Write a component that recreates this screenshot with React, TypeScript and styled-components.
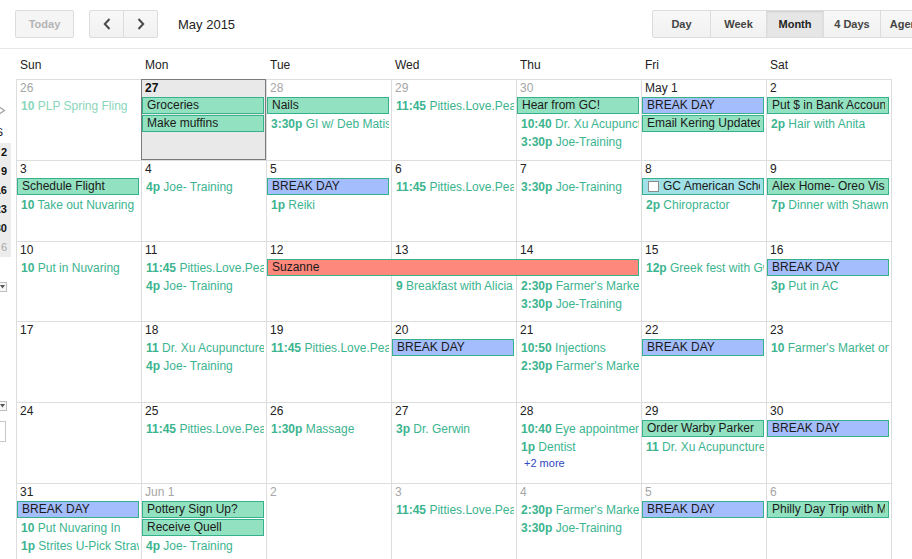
import React from 'react';
import styled, { createGlobalStyle } from 'styled-components';

const GlobalStyle = createGlobalStyle`
  html, body {
    margin: 0;
    padding: 0;
    overflow: hidden;
    background: #fff;
  }
  body {
    font-family: 'Liberation Sans', Arial, sans-serif;
    color: #222;
  }
`;

type Tone = 'green' | 'blue' | 'red' | 'cyan';

type CalEvent =
  | { kind: 'chip'; col: number; slot: number; span?: number; tone: Tone; title: string; task?: boolean }
  | { kind: 'timed'; col: number; slot: number; time: string; title: string; faded?: boolean }
  | { kind: 'more'; col: number; slot: number; count: number };

type Day = { label: string; muted?: boolean; today?: boolean };
type Week = { days: Day[]; events: CalEvent[] };

const toneFill: Record<Tone, string> = {
  green: '#92e1c0',
  blue: '#a4bdfc',
  red: '#ff887c',
  cyan: '#9fe1e7',
};

const chip = (col: number, slot: number, tone: Tone, title: string, span = 1): CalEvent => ({
  kind: 'chip', col, slot, tone, title, span,
});
const timed = (col: number, slot: number, time: string, title: string, faded = false): CalEvent => ({
  kind: 'timed', col, slot, time, title, faded,
});

const weeks: Week[] = [
  {
    days: [
      { label: '26', muted: true },
      { label: '27', today: true },
      { label: '28', muted: true },
      { label: '29', muted: true },
      { label: '30', muted: true },
      { label: 'May 1' },
      { label: '2' },
    ],
    events: [
      timed(1, 1, '10', 'PLP Spring Fling', true),
      chip(2, 1, 'green', 'Groceries'),
      chip(2, 2, 'green', 'Make muffins'),
      chip(3, 1, 'green', 'Nails'),
      timed(3, 2, '3:30p', 'GI w/ Deb Matisse'),
      timed(4, 1, '11:45', 'Pitties.Love.Peace'),
      chip(5, 1, 'green', 'Hear from GC!'),
      timed(5, 2, '10:40', 'Dr. Xu Acupuncture'),
      timed(5, 3, '3:30p', 'Joe-Training'),
      chip(6, 1, 'blue', 'BREAK DAY'),
      chip(6, 2, 'green', 'Email Kering Updated'),
      chip(7, 1, 'green', 'Put $ in Bank Account'),
      timed(7, 2, '2p', 'Hair with Anita'),
    ],
  },
  {
    days: ['3', '4', '5', '6', '7', '8', '9'].map((label) => ({ label })),
    events: [
      chip(1, 1, 'green', 'Schedule Flight'),
      timed(1, 2, '10', 'Take out Nuvaring'),
      timed(2, 1, '4p', 'Joe- Training'),
      chip(3, 1, 'blue', 'BREAK DAY'),
      timed(3, 2, '1p', 'Reiki'),
      timed(4, 1, '11:45', 'Pitties.Love.Peace'),
      timed(5, 1, '3:30p', 'Joe-Training'),
      { kind: 'chip', col: 6, slot: 1, tone: 'cyan', title: 'GC American School', task: true },
      timed(6, 2, '2p', 'Chiropractor'),
      chip(7, 1, 'green', 'Alex Home- Oreo Visit'),
      timed(7, 2, '7p', 'Dinner with Shawna'),
    ],
  },
  {
    days: ['10', '11', '12', '13', '14', '15', '16'].map((label) => ({ label })),
    events: [
      timed(1, 1, '10', 'Put in Nuvaring'),
      timed(2, 1, '11:45', 'Pitties.Love.Peace'),
      timed(2, 2, '4p', 'Joe- Training'),
      chip(3, 1, 'red', 'Suzanne', 3),
      timed(4, 2, '9', 'Breakfast with Alicia'),
      timed(5, 2, '2:30p', "Farmer's Market"),
      timed(5, 3, '3:30p', 'Joe-Training'),
      timed(6, 1, '12p', 'Greek fest with Gwen'),
      chip(7, 1, 'blue', 'BREAK DAY'),
      timed(7, 2, '3p', 'Put in AC'),
    ],
  },
  {
    days: ['17', '18', '19', '20', '21', '22', '23'].map((label) => ({ label })),
    events: [
      timed(2, 1, '11', 'Dr. Xu Acupuncture'),
      timed(2, 2, '4p', 'Joe- Training'),
      timed(3, 1, '11:45', 'Pitties.Love.Peace'),
      chip(4, 1, 'blue', 'BREAK DAY'),
      timed(5, 1, '10:50', 'Injections'),
      timed(5, 2, '2:30p', "Farmer's Market"),
      chip(6, 1, 'blue', 'BREAK DAY'),
      timed(7, 1, '10', "Farmer's Market on Main"),
    ],
  },
  {
    days: ['24', '25', '26', '27', '28', '29', '30'].map((label) => ({ label })),
    events: [
      timed(2, 1, '11:45', 'Pitties.Love.Peace'),
      timed(3, 1, '1:30p', 'Massage'),
      timed(4, 1, '3p', 'Dr. Gerwin'),
      timed(5, 1, '10:40', 'Eye appointment'),
      timed(5, 2, '1p', 'Dentist'),
      { kind: 'more', col: 5, slot: 3, count: 2 },
      chip(6, 1, 'green', 'Order Warby Parker'),
      timed(6, 2, '11', 'Dr. Xu Acupuncture'),
      chip(7, 1, 'blue', 'BREAK DAY'),
    ],
  },
  {
    days: [
      { label: '31' },
      { label: 'Jun 1', muted: true },
      { label: '2', muted: true },
      { label: '3', muted: true },
      { label: '4', muted: true },
      { label: '5', muted: true },
      { label: '6', muted: true },
    ],
    events: [
      chip(1, 1, 'blue', 'BREAK DAY'),
      timed(1, 2, '10', 'Put Nuvaring In'),
      timed(1, 3, '1p', 'Strites U-Pick Strawberries'),
      chip(2, 1, 'green', 'Pottery Sign Up?'),
      chip(2, 2, 'green', 'Receive Quell'),
      timed(2, 3, '4p', 'Joe- Training'),
      timed(4, 1, '11:45', 'Pitties.Love.Peace'),
      timed(5, 1, '2:30p', "Farmer's Market"),
      timed(5, 2, '3:30p', 'Joe-Training'),
      chip(6, 1, 'blue', 'BREAK DAY'),
      chip(7, 1, 'green', 'Philly Day Trip with Mom'),
    ],
  },
];

const dayNames = ['Sun', 'Mon', 'Tue', 'Wed', 'Thu', 'Fri', 'Sat'];
const views = [
  { label: 'Day', w: 59 },
  { label: 'Week', w: 57 },
  { label: 'Month', w: 58, active: true },
  { label: '4 Days', w: 58 },
  { label: 'Agenda', w: 60 },
];
const miniSaturdays = ['2', '9', '16', '23', '30'];

export default function App() {
  return (
    <Page>
      <GlobalStyle />
      <Toolbar>
        <Button $w={59} disabled>
          Today
        </Button>
        <NavGroup>
          <Button $w={35} aria-label="Previous">
            <svg width="8" height="12" viewBox="0 0 8 12">
              <path d="M6.5 1 L1.8 6 L6.5 11" fill="none" stroke="#4a4a4a" strokeWidth="2" />
            </svg>
          </Button>
          <Button $w={35} aria-label="Next">
            <svg width="8" height="12" viewBox="0 0 8 12">
              <path d="M1.5 1 L6.2 6 L1.5 11" fill="none" stroke="#4a4a4a" strokeWidth="2" />
            </svg>
          </Button>
        </NavGroup>
        <Title>May 2015</Title>
        <ViewGroup>
          {views.map((v) => (
            <Button key={v.label} $w={v.w} $active={v.active}>
              {v.label}
            </Button>
          ))}
        </ViewGroup>
      </Toolbar>

      <Main>
        <Sidebar>
          <MiniArrow width="6" height="11" viewBox="0 0 6 11">
            <path d="M-3 0.5 L4.5 5.5 L-3 10.5" fill="none" stroke="#a0a0a0" strokeWidth="1.2" />
          </MiniArrow>
          <MiniHead>S</MiniHead>
          <MiniBand>
            {miniSaturdays.map((d) => (
              <MiniDay key={d}>{d}</MiniDay>
            ))}
            <MiniDay $muted>6</MiniDay>
          </MiniBand>
          <DropBox $top={25}>
            <svg width="5" height="4" viewBox="0 0 5 4">
              <path d="M0 0 H5 L2.5 3.5 Z" fill="#555" />
            </svg>
          </DropBox>
          <DropBox $top={109}>
            <svg width="5" height="4" viewBox="0 0 5 4">
              <path d="M0 0 H5 L2.5 3.5 Z" fill="#555" />
            </svg>
          </DropBox>
          <InputStub />
        </Sidebar>

        <Calendar>
          <HeadRow>
            {dayNames.map((n) => (
              <HeadCell key={n}>{n}</HeadCell>
            ))}
          </HeadRow>
          <Weeks>
            {weeks.map((week, wi) => (
              <WeekRow key={wi}>
                {week.days.map((d, di) => (
                  <DayCell key={`c${di}`} $col={di + 1} $today={d.today} />
                ))}
                {week.days.map((d, di) => (
                  <DateLabel key={`d${di}`} $col={di + 1} $muted={d.muted} $today={d.today}>
                    {d.label}
                  </DateLabel>
                ))}
                {week.events.map((ev, ei) => {
                  if (ev.kind === 'chip') {
                    return (
                      <Chip
                        key={ei}
                        $col={ev.col}
                        $slot={ev.slot}
                        $span={ev.span ?? 1}
                        $fill={toneFill[ev.tone]}
                      >
                        {ev.task && <TaskBox />}
                        <ChipText>{ev.title}</ChipText>
                      </Chip>
                    );
                  }
                  if (ev.kind === 'timed') {
                    return (
                      <Timed key={ei} $col={ev.col} $slot={ev.slot} $faded={ev.faded}>
                        <b>{ev.time}</b> {ev.title}
                      </Timed>
                    );
                  }
                  return (
                    <More key={ei} $col={ev.col} $slot={ev.slot}>
                      +{ev.count} more
                    </More>
                  );
                })}
              </WeekRow>
            ))}
          </Weeks>
        </Calendar>
      </Main>
    </Page>
  );
}

const Page = styled.div`
  width: 960px;
`;

const Toolbar = styled.div`
  display: flex;
  align-items: center;
  height: 48px;
  padding: 0 20px 0 15px;
  border-bottom: 1px solid #e8e8e8;
`;

const Button = styled.button<{ $w: number; $active?: boolean }>`
  box-sizing: border-box;
  display: inline-flex;
  align-items: center;
  justify-content: center;
  width: ${(p) => p.$w}px;
  height: 28px;
  padding: 0;
  border: 1px solid #dcdcdc;
  border-radius: 2px;
  background: ${(p) => (p.$active ? '#e6e6e6' : 'linear-gradient(#f8f8f8, #f1f1f1)')};
  box-shadow: ${(p) => (p.$active ? 'inset 0 1px 2px rgba(0, 0, 0, 0.1)' : 'none')};
  color: ${(p) => (p.$active ? '#222' : '#444')};
  font: bold 11px 'Liberation Sans', Arial, sans-serif;
  white-space: nowrap;
  cursor: pointer;

  &:disabled {
    color: #b4b4b4;
    background: #f5f5f5;
    cursor: default;
  }
`;

const NavGroup = styled.div`
  display: flex;
  margin-left: 15px;

  ${Button} {
    border-radius: 0;
  }
  ${Button}:first-child {
    border-radius: 2px 0 0 2px;
  }
  ${Button}:last-child {
    margin-left: -1px;
    border-radius: 0 2px 2px 0;
  }
`;

const Title = styled.div`
  margin-left: 20px;
  font-size: 13px;
  color: #222;
`;

const ViewGroup = styled.div`
  display: flex;
  margin-left: auto;

  ${Button} {
    border-radius: 0;
  }
  ${Button} + ${Button} {
    margin-left: -1px;
  }
  ${Button}:first-child {
    border-radius: 2px 0 0 2px;
  }
`;

const Main = styled.div`
  display: flex;
`;

const Sidebar = styled.div`
  box-sizing: border-box;
  width: 16px;
  flex-shrink: 0;
  display: flex;
  flex-direction: column;
  padding-top: 56px;
  overflow: hidden;
`;

const MiniArrow = styled.svg`
  display: block;
`;

const MiniRow = styled.div`
  box-sizing: border-box;
  display: flex;
  justify-content: flex-end;
  width: 11px;
  height: 19px;
  line-height: 19px;
  font-size: 11px;
  white-space: nowrap;
  overflow: hidden;
`;

const MiniHead = styled(MiniRow)`
  margin-top: 7px;
  padding-right: 8px;
  color: #222;
`;

const MiniBand = styled.div`
  width: 11px;
  margin-top: 1px;
  background: #ececec;
`;

const MiniDay = styled(MiniRow)<{ $muted?: boolean }>`
  padding-right: 4px;
  font-weight: ${(p) => (p.$muted ? 'normal' : 'bold')};
  color: ${(p) => (p.$muted ? '#a8a8a8' : '#111')};
`;

const DropBox = styled.div<{ $top: number }>`
  box-sizing: border-box;
  display: flex;
  align-items: center;
  justify-content: flex-end;
  width: 7px;
  height: 10px;
  margin-top: ${(p) => p.$top}px;
  padding-right: 1px;
  border: 1px solid #bdbdbd;
  border-left: none;
  background: #f6f6f6;
`;

const InputStub = styled.div`
  box-sizing: border-box;
  width: 6px;
  height: 21px;
  margin-top: 10px;
  border: 1px solid #c8c8c8;
  border-left: none;
`;

const Calendar = styled.div`
  display: flex;
  flex-direction: column;
`;

const HeadRow = styled.div`
  display: grid;
  grid-template-columns: repeat(7, 125px);
  height: 30px;
`;

const HeadCell = styled.div`
  padding: 9px 0 0 4px;
  font-size: 12px;
  line-height: 14px;
  color: #222;
`;

const Weeks = styled.div`
  width: 875px;
  border-right: 1px solid #dddddd;
`;

const WeekRow = styled.div`
  display: grid;
  grid-template-columns: repeat(7, 125px);
  grid-template-rows: 18px 18px 18px 18px 1fr;
  height: 80.75px;
`;

const DayCell = styled.div<{ $col: number; $today?: boolean }>`
  grid-column: ${(p) => p.$col};
  grid-row: 1 / -1;
  border-left: 1px solid ${(p) => (p.$today ? '#7b7b7b' : '#dddddd')};
  border-top: 1px solid ${(p) => (p.$today ? '#7b7b7b' : '#dddddd')};
  background: ${(p) => (p.$today ? '#e9e9e9' : '#fff')};
  box-shadow: ${(p) => (p.$today ? 'inset -1px -1px 0 #7b7b7b' : 'none')};
`;

const DateLabel = styled.div<{ $col: number; $muted?: boolean; $today?: boolean }>`
  grid-column: ${(p) => p.$col};
  grid-row: 1;
  padding: 2px 0 0 4px;
  font-size: 12px;
  line-height: 14px;
  font-weight: ${(p) => (p.$today ? 'bold' : 'normal')};
  color: ${(p) => (p.$muted ? '#a6a6a6' : p.$today ? '#111' : '#222')};
  white-space: nowrap;
`;

const Chip = styled.div<{ $col: number; $slot: number; $span: number; $fill: string }>`
  grid-column: ${(p) => `${p.$col} / span ${p.$span}`};
  grid-row: ${(p) => p.$slot + 1};
  box-sizing: border-box;
  display: flex;
  align-items: center;
  min-width: 0;
  height: 17px;
  margin: 0 2px 0 1px;
  padding: 0 3px 0 4px;
  border: 1px solid #35b28b;
  background: ${(p) => p.$fill};
  color: #1a1a1a;
  font-size: 12px;
  line-height: 15px;
  overflow: hidden;
`;

const ChipText = styled.span`
  flex: 1;
  min-width: 0;
  white-space: nowrap;
  overflow: hidden;
`;

const TaskBox = styled.span`
  box-sizing: border-box;
  flex-shrink: 0;
  width: 11px;
  height: 11px;
  margin: 0 4px 0 1px;
  border: 1px solid #8c8c8c;
  background: #fff;
`;

const Timed = styled.div<{ $col: number; $slot: number; $faded?: boolean }>`
  grid-column: ${(p) => p.$col};
  grid-row: ${(p) => p.$slot + 1};
  min-width: 0;
  margin: 0 2px 0 1px;
  padding-left: 4px;
  font-size: 12px;
  line-height: 18px;
  color: ${(p) => (p.$faded ? '#8ad7ba' : '#3bb48f')};
  white-space: nowrap;
  overflow: hidden;
`;

const More = styled.div<{ $col: number; $slot: number }>`
  grid-column: ${(p) => p.$col};
  grid-row: ${(p) => p.$slot + 1};
  padding-left: 8px;
  font-size: 11px;
  line-height: 14px;
  color: #3049c0;
  white-space: nowrap;
`;
